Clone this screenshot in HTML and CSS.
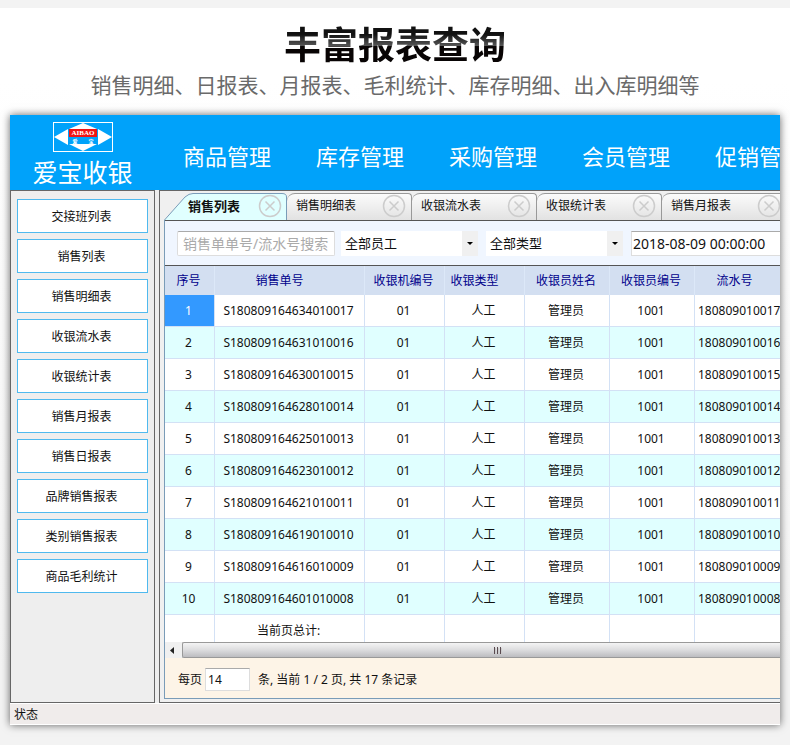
FILE: index.html
```
<!DOCTYPE html>
<html lang="zh-CN">

<head>
    <meta charset="UTF-8">
    <meta name="viewport" content="width=device-width, initial-scale=1.0">
    <title>丰富报表查询</title>
    <link rel="stylesheet" href="styles.css">
</head>

<body>
    <div class="page">
        <div class="intro">
            <h1>丰富报表查询</h1>
            <p>销售明细、日报表、月报表、毛利统计、库存明细、出入库明细等</p>
        </div>

        <div class="window">
            <header class="header">
                <div class="brand">
                    <svg class="logo" width="60" height="30" viewBox="0 0 60 30">
                        <rect x="0.5" y="0.5" width="59" height="29" fill="#00a2fa" stroke="#fff" />
                        <path d="M16 7L30 1L44 7ZM16 22L30 29L44 22ZM15 7V23L1 15ZM45 7V23L59 15Z" fill="#fff" />
                        <rect x="16" y="7" width="28" height="8" fill="#f01414" />
                        <text x="30" y="13" class="logo-en" text-anchor="middle" fill="#fff">AIBAO</text>
                        <text x="22" y="21" class="logo-cn" text-anchor="middle" fill="#fff">爱</text>
                        <text x="38" y="21" class="logo-cn" text-anchor="middle" fill="#fff">宝</text>
                    </svg>
                    <div class="brand-name">爱宝收银</div>
                </div>
                <nav class="nav">
                    <a href="#">商品管理</a>
                    <a href="#">库存管理</a>
                    <a href="#">采购管理</a>
                    <a href="#">会员管理</a>
                    <a href="#">促销管理</a>
                </nav>
            </header>

            <div class="content">
                <aside class="sidebar">
                    <button>交接班列表</button>
                    <button>销售列表</button>
                    <button>销售明细表</button>
                    <button>收银流水表</button>
                    <button>收银统计表</button>
                    <button>销售月报表</button>
                    <button>销售日报表</button>
                    <button>品牌销售报表</button>
                    <button>类别销售报表</button>
                    <button>商品毛利统计</button>
                </aside>

                <main class="main">
                    <div class="tabs">
                        <div class="tab active">
                            <svg class="tab-shape" viewBox="0 0 123 27" preserveAspectRatio="none">
                                <path d="M0.5 27L21 4Q25 0.5 29 0.5H118Q122.500 0.500 122.500 4V27" fill="#e0ffff" stroke="#7a9cb8" />
                            </svg>
                            <span>销售列表</span>
                            <button class="close" aria-label="关闭">
                                <svg width="24" height="24" viewBox="0 0 24 24"><circle cx="12" cy="12" r="10.500" /><path d="M7.500 7.500l9 9M16.500 7.500l-9 9" /></svg>
                            </button>
                        </div>
                        <div class="tab">
                            <span>销售明细表</span>
                            <button class="close" aria-label="关闭">
                                <svg width="24" height="24" viewBox="0 0 24 24"><circle cx="12" cy="12" r="10.500" /><path d="M7.500 7.500l9 9M16.500 7.500l-9 9" /></svg>
                            </button>
                        </div>
                        <div class="tab">
                            <span>收银流水表</span>
                            <button class="close" aria-label="关闭">
                                <svg width="24" height="24" viewBox="0 0 24 24"><circle cx="12" cy="12" r="10.500" /><path d="M7.500 7.500l9 9M16.500 7.500l-9 9" /></svg>
                            </button>
                        </div>
                        <div class="tab">
                            <span>收银统计表</span>
                            <button class="close" aria-label="关闭">
                                <svg width="24" height="24" viewBox="0 0 24 24"><circle cx="12" cy="12" r="10.500" /><path d="M7.500 7.500l9 9M16.500 7.500l-9 9" /></svg>
                            </button>
                        </div>
                        <div class="tab">
                            <span>销售月报表</span>
                            <button class="close" aria-label="关闭">
                                <svg width="24" height="24" viewBox="0 0 24 24"><circle cx="12" cy="12" r="10.500" /><path d="M7.500 7.500l9 9M16.500 7.500l-9 9" /></svg>
                            </button>
                        </div>
                    </div>

                    <div class="panel">
                        <div class="filters">
                            <input class="search" type="text" placeholder="销售单单号/流水号搜索" aria-label="搜索">
                            <div class="combo">
                                <select aria-label="员工">
                                    <option>全部员工</option>
                                </select>
                            </div>
                            <div class="combo">
                                <select aria-label="类型">
                                    <option>全部类型</option>
                                </select>
                            </div>
                            <input class="date" type="text" value="2018-08-09 00:00:00" aria-label="开始时间">
                        </div>

                        <table>
                            <colgroup>
                                <col class="c-no">
                                <col class="c-order">
                                <col class="c-mid">
                                <col class="c-mid">
                                <col class="c-staff">
                                <col class="c-staff">
                                <col class="c-serial">
                            </colgroup>
                            <thead>
                                <tr><th>序号</th><th class="wide">销售单号</th><th>收银机编号</th><th class="wide">收银类型</th><th>收银员姓名</th><th>收银员编号</th><th class="wide">流水号</th></tr>
                            </thead>
                            <tbody>
                                <tr><td class="selected">1</td><td>S180809164634010017</td><td>01</td><td>人工</td><td>管理员</td><td>1001</td><td>180809010017</td></tr>
                                <tr><td>2</td><td>S180809164631010016</td><td>01</td><td>人工</td><td>管理员</td><td>1001</td><td>180809010016</td></tr>
                                <tr><td>3</td><td>S180809164630010015</td><td>01</td><td>人工</td><td>管理员</td><td>1001</td><td>180809010015</td></tr>
                                <tr><td>4</td><td>S180809164628010014</td><td>01</td><td>人工</td><td>管理员</td><td>1001</td><td>180809010014</td></tr>
                                <tr><td>5</td><td>S180809164625010013</td><td>01</td><td>人工</td><td>管理员</td><td>1001</td><td>180809010013</td></tr>
                                <tr><td>6</td><td>S180809164623010012</td><td>01</td><td>人工</td><td>管理员</td><td>1001</td><td>180809010012</td></tr>
                                <tr><td>7</td><td>S180809164621010011</td><td>01</td><td>人工</td><td>管理员</td><td>1001</td><td>180809010011</td></tr>
                                <tr><td>8</td><td>S180809164619010010</td><td>01</td><td>人工</td><td>管理员</td><td>1001</td><td>180809010010</td></tr>
                                <tr><td>9</td><td>S180809164616010009</td><td>01</td><td>人工</td><td>管理员</td><td>1001</td><td>180809010009</td></tr>
                                <tr><td>10</td><td>S180809164601010008</td><td>01</td><td>人工</td><td>管理员</td><td>1001</td><td>180809010008</td></tr>
                            </tbody>
                            <tfoot>
                                <tr><td></td><td>当前页总计:</td><td></td><td></td><td></td><td></td><td></td></tr>
                            </tfoot>
                        </table>

                        <div class="scrollbar">
                            <button class="scroll-left" aria-label="向左">
                                <svg width="4" height="7" viewBox="0 0 4 7"><path d="M4 0V7L0 3.500Z" fill="#222" /></svg>
                            </button>
                            <div class="thumb">
                                <svg width="9" height="7" viewBox="0 0 9 7"><path d="M1.500 0V7M4.500 0V7M7.500 0V7" stroke="#5a4a50" /><path d="M2.500 1V7M5.500 1V7M8.500 1V7" stroke="#ccc" /></svg>
                            </div>
                        </div>

                        <div class="pager">
                            <label for="size">每页</label>
                            <input id="size" type="text" value="14">
                            <span>条, 当前 1 / 2 页, 共 17 条记录</span>
                        </div>
                    </div>
                </main>
            </div>

            <footer class="status">状态</footer>
        </div>
    </div>
</body>

</html>
```
FILE: styles.css
```
* {
    margin: 0;
    padding: 0;
    box-sizing: border-box;
}

body {
    background-color: white;
    font-family: "Noto Sans", "Noto Sans CJK SC", sans-serif;
    font-size: 12px;
    line-height: 18px;
    color: #111;
}

input,
select,
button {
    font-family: inherit;
    font-size: 12px;
    color: #111;
}

.page {
    border-top: 8px solid #f3f3f3;
    padding: 0 10px 20px;
    background-image: linear-gradient(white 10%, #f3f3f3 90%);
}

.intro {
    height: 107px;
    padding-top: 13px;
    text-align: center;
    font-family: "Noto Sans CJK SC", sans-serif;
}

h1 {
    font-size: 37px;
    line-height: 44px;
    font-weight: bold;
    color: transparent;
    background-image: linear-gradient(#111 30%, #555 56%, #080404 58%);
    background-clip: text;
    -webkit-background-clip: text;
}

.intro p {
    font-size: 21px;
    line-height: 38px;
    color: #6a6a6a;
    white-space: nowrap;
}

.window {
    overflow: hidden;
    background-color: #eee;
    box-shadow: 0 0 8px rgba(0, 0, 0, 0.6);
}

/* header */

.header {
    height: 75px;
    display: flex;
    background-color: #00a2fa;
    color: white;
}

.brand {
    width: 145px;
    flex-shrink: 0;
    padding-top: 7px;
    display: flex;
    flex-direction: column;
    align-items: center;
    gap: 2px;
}

.logo {
    display: block;
    flex-shrink: 0;
}

.logo-en {
    font: bold 7px "Liberation Serif", serif;
}

.logo-cn {
    font: bold 5px "Noto Sans CJK SC", sans-serif;
}

.brand-name {
    font-size: 25px;
    line-height: 36px;
}

.nav {
    display: flex;
    gap: 45px;
    padding: 23px 0 0 28px;
    white-space: nowrap;
}

.nav a {
    font-size: 22px;
    line-height: 36px;
    color: white;
    text-decoration: none;
}

/* sidebar */

.content {
    display: flex;
    gap: 4px;
}

.sidebar {
    width: 145px;
    flex-shrink: 0;
    padding: 8px 6px;
    display: flex;
    flex-direction: column;
    gap: 6px;
    border: 1px solid #666;
    background-color: #eee;
}

.sidebar button {
    height: 34px;
    padding-right: 2px;
    border: 1px solid #4fb9ee;
    background-color: white;
}

.main {
    flex: 1;
    min-width: 0;
    padding: 2px 0 3px 4px;
    border: 1px solid #666;
    border-right: none;
    background-color: #f0f0f0;
}

/* tabs */

.tabs {
    display: flex;
    overflow: hidden;
}

.tab {
    position: relative;
    width: 125px;
    height: 27px;
    flex-shrink: 0;
    padding: 0 5px 2px 9px;
    display: flex;
    align-items: center;
    justify-content: space-between;
    border: 1px solid #999;
    border-left: none;
    border-bottom: none;
    border-radius: 8px 4px 0 0;
    background-image: linear-gradient(#fbfbfb, #e2e2e2);
}

.tab.active {
    width: 123px;
    padding-left: 24px;
    border: none;
    background: none;
    font-size: 13px;
    font-weight: bold;
}

.tab-shape {
    position: absolute;
    left: 0;
    top: 0;
    width: 100%;
    height: 100%;
}

.tab span {
    position: relative;
}

.close {
    position: relative;
    width: 24px;
    height: 24px;
    border: none;
    background: none;
}

.close svg {
    display: block;
    fill: none;
    stroke: #ccc;
    stroke-width: 1.5;
}

/* panel */

.panel {
    overflow: hidden;
    border-left: 1px solid #7a9cb8;
    border-bottom: 1px solid #7a9cb8;
    background-color: white;
}

.filters {
    height: 46px;
    display: flex;
    align-items: center;
    padding-left: 12px;
    overflow: hidden;
    border-top: 1px solid #555;
    border-bottom: 1px solid #555;
    background-color: #f0f6ff;
}

.filters input {
    height: 25px;
    flex-shrink: 0;
    border: 1px solid #ddd;
    border-top-color: #aaa;
    background-color: white;
    font-size: 14px;
}

.search {
    width: 158px;
    padding-left: 5px;
    margin-right: 6px;
    border-radius: 2px;
}

.search::placeholder {
    color: #aaa;
}

.date {
    width: 160px;
    padding-left: 1px;
}

.combo {
    position: relative;
    width: 137px;
    height: 25px;
    flex-shrink: 0;
    margin-right: 8px;
}

.combo select {
    appearance: none;
    width: 100%;
    height: 100%;
    padding-left: 4px;
    border: none;
    border-right: 16px solid #f0f0f0;
    background-color: white;
    font-size: 13px;
}

.combo::after {
    content: "";
    position: absolute;
    right: 5px;
    top: 11px;
    border: 3px solid transparent;
    border-top-color: #000;
    border-bottom: none;
    pointer-events: none;
}

/* table */

table {
    width: 630px;
    table-layout: fixed;
    border-collapse: separate;
    border-spacing: 0;
}

.c-no {
    width: 50px;
}

.c-order {
    width: 150px;
}

.c-mid {
    width: 80px;
}

.c-staff {
    width: 85px;
}

.c-serial {
    width: 100px;
}

th {
    height: 29px;
    padding-right: 2px;
    border-right: 1px solid #dce8f8;
    background-color: #d3dff1;
    color: #00008b;
    font-weight: normal;
    white-space: nowrap;
}

th.wide {
    padding-right: 20px;
}

td {
    height: 32px;
    padding-right: 2px;
    border-right: 1px solid #d3e1f5;
    border-bottom: 1px solid #d3e1f5;
    text-align: center;
    white-space: nowrap;
}

td:last-child {
    padding-left: 3px;
    text-align: left;
}

tbody tr:nth-child(even) {
    background-color: #e0ffff;
}

td.selected {
    background-color: #3399ff;
    color: white;
}

tfoot td {
    height: 27px;
    padding-top: 4px;
    border-bottom: none;
}

/* bottom of the panel */

.scrollbar {
    height: 16px;
    display: flex;
    background-color: #f0f0f0;
}

.scroll-left {
    width: 17px;
    padding-right: 4px;
    border: none;
    background: none;
    line-height: 0;
}

.thumb {
    flex: 1;
    display: flex;
    align-items: center;
    justify-content: center;
    padding-left: 32px;
    border: 1px solid #999;
    border-right: none;
    border-radius: 2px 0 0 2px;
    background-image: linear-gradient(#f4f4f4, #dcdcde 50%, #bcbcc0);
}

.pager {
    height: 40px;
    display: flex;
    align-items: center;
    padding: 3px 0 0 13px;
    background-color: #fdf4e7;
}

.pager input {
    width: 45px;
    height: 23px;
    margin: 0 8px 0 3px;
    padding-left: 2px;
    border: 1px solid #ddd;
    border-top-color: #aaa;
    background-color: white;
}

.status {
    height: 22px;
    padding-left: 4px;
    line-height: 22px;
    border-top: 1px solid #fff;
    border-bottom: 1px solid #fff;
    background-color: #f0eceb;
}
```
